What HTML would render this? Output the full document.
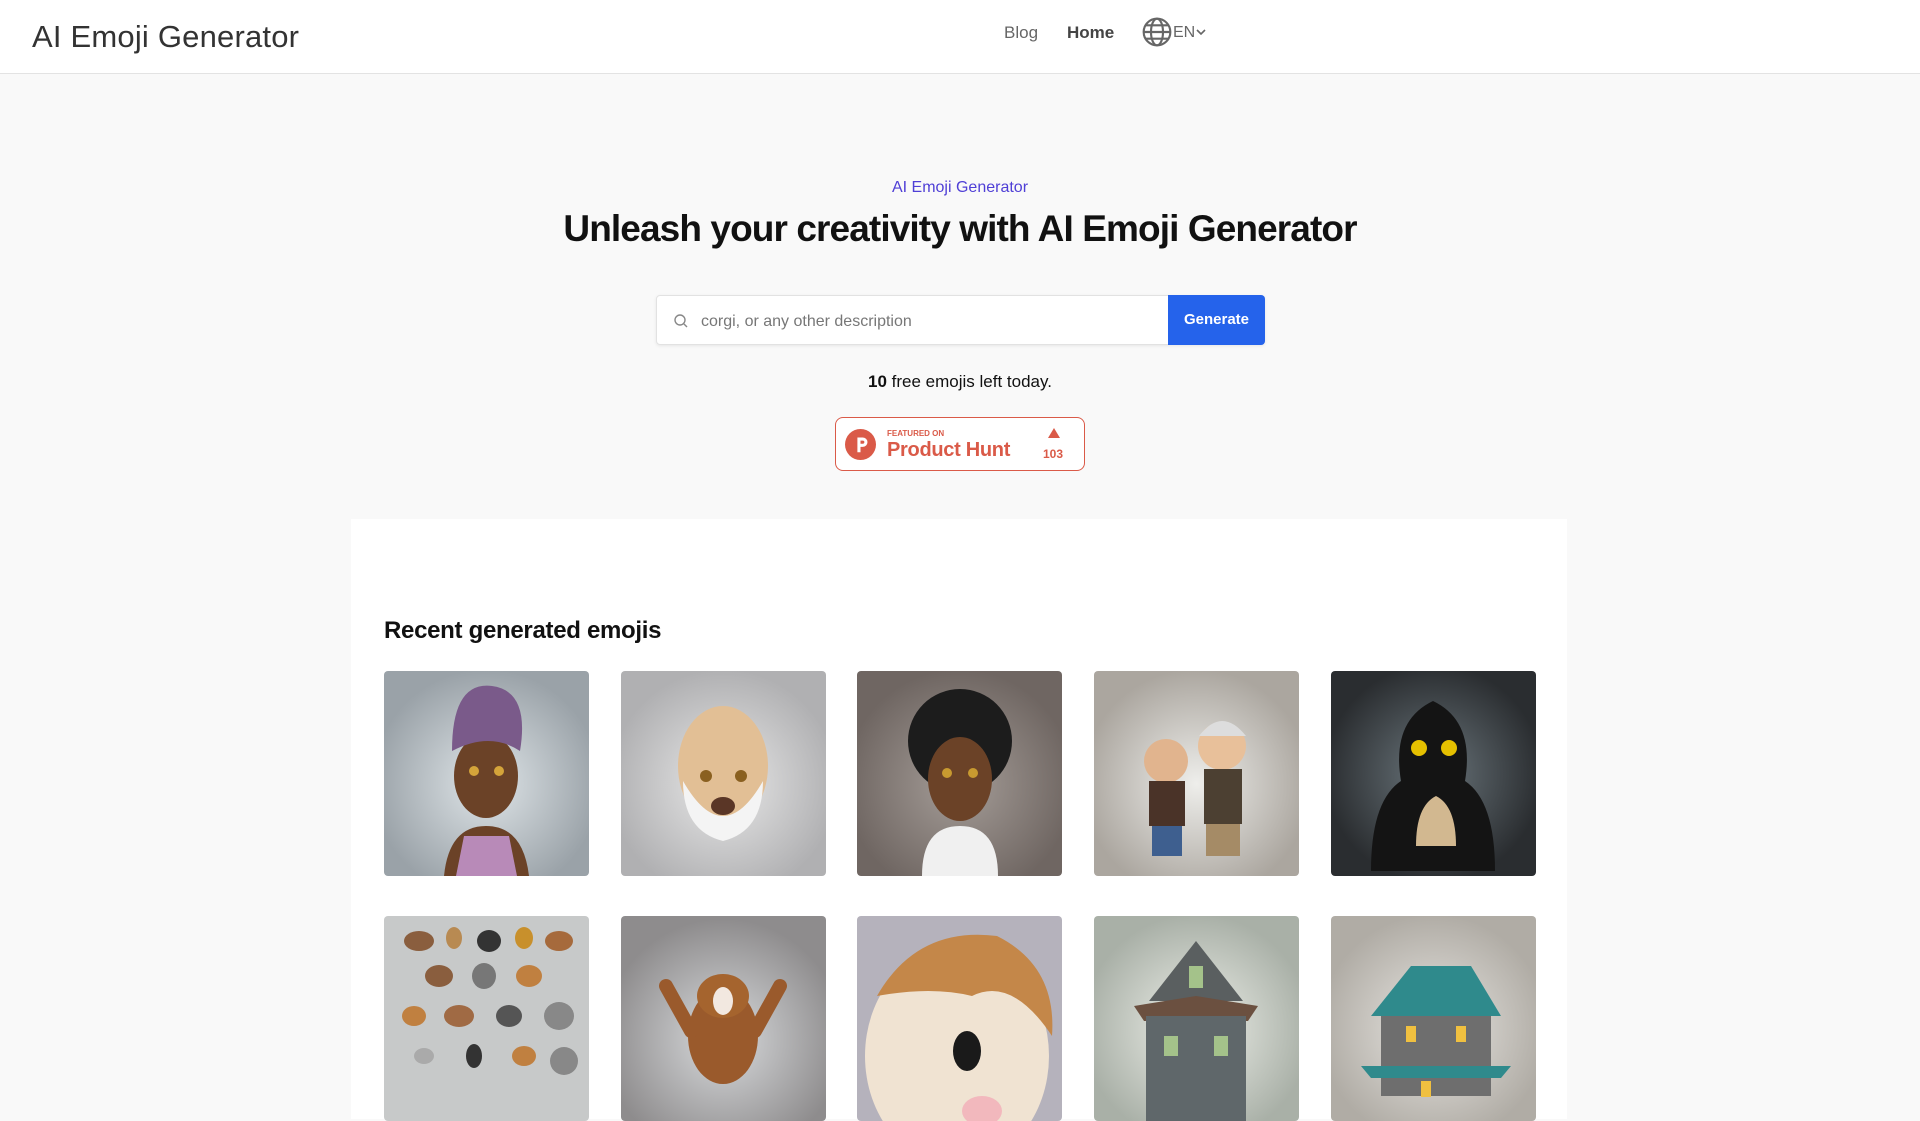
<!DOCTYPE html>
<html><head><meta charset="utf-8"><style>
*{box-sizing:border-box;margin:0;padding:0}
body{width:1920px;height:1080px;overflow:hidden;background:#f9f9f9;font-family:"Liberation Sans",sans-serif;color:#111}
header{height:74px;background:#fff;border-bottom:1px solid #e3e3e3;position:relative}
.logo{position:absolute;left:32px;top:19px;font-size:31px;color:#333;letter-spacing:0.2px}
.nav{position:absolute;top:23px;font-size:17px;color:#666}
.sub{position:absolute;top:179px;width:100%;text-align:center;color:#4f3fd6;font-size:16px}
h1{position:absolute;top:208px;width:100%;text-align:center;font-size:37px;font-weight:bold;color:#111;letter-spacing:-0.9px}
.search{position:absolute;left:656px;top:295px;width:609px;height:50px;background:#fff;border:1px solid #e2e2e2;border-radius:4px;box-shadow:0 1px 3px rgba(0,0,0,.08)}
.search .ph{position:absolute;left:44px;top:17px;font-size:16px;color:#777}
.btn{position:absolute;right:-1px;top:-1px;width:97px;height:50px;background:#2563eb;color:#fff;border-radius:0 4px 4px 0;font-size:15px;font-weight:bold;text-align:center;line-height:50px}
.left{position:absolute;top:372px;width:100%;text-align:center;font-size:17px;color:#111}
.ph-badge{position:absolute;left:835px;top:417px;width:250px;height:54px;background:#fff;border:1px solid #da5a48;border-radius:8px}
.panel{position:absolute;left:351px;top:519px;width:1216px;height:600px;background:#fff}
.rt{position:absolute;left:384px;top:617px;font-size:24px;font-weight:bold;color:#111;letter-spacing:-0.3px}
.card{position:absolute;width:205px;height:205px;border-radius:4px;overflow:hidden}
</style></head><body>
<header>
<div class="logo">AI Emoji Generator</div>
<div class="nav" style="left:1004px">Blog</div>
<div class="nav" style="left:1067px;color:#444;font-weight:bold">Home</div>
<svg style="position:absolute;left:1141px;top:16px" width="32" height="32" viewBox="0 0 24 24" fill="none" stroke="#666" stroke-width="1.6"><circle cx="12" cy="12" r="10"/><ellipse cx="12" cy="12" rx="4.5" ry="10"/><line x1="2" y1="12" x2="22" y2="12"/><line x1="3.5" y1="7" x2="20.5" y2="7"/><line x1="3.5" y1="17" x2="20.5" y2="17"/></svg>
<div class="nav" style="left:1173px;font-size:16px;top:24px">EN</div>
<svg style="position:absolute;left:1196px;top:28px" width="10" height="8" viewBox="0 0 10 8"><path d="M1 2l4 4 4-4" stroke="#666" stroke-width="1.6" fill="none"/></svg>
</header>
<div class="sub">AI Emoji Generator</div>
<h1>Unleash your creativity with AI Emoji Generator</h1>
<div class="search">
<svg style="position:absolute;left:16px;top:17px" width="16" height="16" viewBox="0 0 16 16" fill="none" stroke="#888" stroke-width="1.4"><circle cx="7" cy="7" r="5"/><path d="M11 11l3 3"/></svg>
<div class="ph">corgi, or any other description</div>
<div class="btn">Generate</div>
</div>
<div class="left"><b>10</b> free emojis left today.</div>
<div class="ph-badge">
<svg style="position:absolute;left:9px;top:11px" width="31" height="31" viewBox="0 0 40 40"><circle cx="20" cy="20" r="20" fill="#da5a48"/><path d="M16 11h7a6 6 0 010 12h-3v7h-4z M20 15v4h3a2 2 0 000-4z" fill="#fff" fill-rule="evenodd"/></svg>
<div style="position:absolute;left:51px;top:11px;font-size:8px;font-weight:bold;color:#da5a48">FEATURED ON</div>
<div style="position:absolute;left:51px;top:21px;font-size:20px;font-weight:bold;color:#da5a48;letter-spacing:-0.3px">Product Hunt</div>
<div style="position:absolute;left:212px;top:10px;width:0;height:0;border-left:6px solid transparent;border-right:6px solid transparent;border-bottom:10px solid #da5a48"></div>
<div style="position:absolute;left:207px;top:29px;font-size:12px;font-weight:bold;color:#da5a48">103</div>
</div>
<div class="panel"></div>
<div class="rt">Recent generated emojis</div>

<div class="card" style="left:384px;top:671px;background:radial-gradient(circle at 50% 55%,#dfe5e8,#9aa2a8 75%)"><svg width="205" height="205"><path d="M60 205q5-50 42-50t43 50z" fill="#6b4227"/><path d="M72 205l8-40h45l8 40z" fill="#b88ab8"/><ellipse cx="102" cy="105" rx="32" ry="42" fill="#6b4227"/><path d="M68 80q0-70 40-65 38 5 28 65q-30-20-68 0z" fill="#7a5a8a"/><circle cx="90" cy="100" r="5" fill="#d4a43a"/><circle cx="115" cy="100" r="5" fill="#d4a43a"/></svg></div>
<div class="card" style="left:621px;top:671px;background:radial-gradient(circle at 50% 55%,#e8e8e8,#b0b0b2 75%)"><svg width="205" height="205"><ellipse cx="102" cy="95" rx="45" ry="60" fill="#e2bf95"/><path d="M62 110q40 70 80 0q0 50-40 60q-40-10-40-60z" fill="#f4f4f4"/><ellipse cx="102" cy="135" rx="12" ry="9" fill="#5a3626"/><circle cx="85" cy="105" r="6" fill="#8a6020"/><circle cx="120" cy="105" r="6" fill="#8a6020"/></svg></div>
<div class="card" style="left:857px;top:671px;background:radial-gradient(circle at 50% 55%,#a59d98,#6f6662 75%)"><svg width="205" height="205"><path d="M65 205q0-50 38-50t38 50z" fill="#f0f0f0"/><ellipse cx="103" cy="70" rx="52" ry="52" fill="#1c1c1c"/><ellipse cx="103" cy="108" rx="32" ry="42" fill="#6b4227"/><circle cx="90" cy="102" r="5" fill="#c89a30"/><circle cx="116" cy="102" r="5" fill="#c89a30"/></svg></div>
<div class="card" style="left:1094px;top:671px;background:radial-gradient(circle at 50% 55%,#eeeeeb,#aba69f 75%)"><svg width="205" height="205"><circle cx="72" cy="90" r="22" fill="#e1b48e"/><rect x="55" y="110" width="36" height="45" fill="#4a3328"/><rect x="58" y="155" width="30" height="30" fill="#3e5f8f"/><circle cx="128" cy="75" r="24" fill="#e8c09a"/><path d="M105 65q23-30 47 0" fill="#ddd"/><rect x="110" y="98" width="38" height="55" fill="#4c4032"/><rect x="112" y="153" width="34" height="32" fill="#a58b66"/></svg></div>
<div class="card" style="left:1331px;top:671px;background:radial-gradient(circle at 50% 50%,#6a757b,#2a2d30 75%)"><svg width="205" height="205"><path d="M40 200q0-70 30-90q-10-60 32-80 42 20 32 80 30 20 30 90z" fill="#141414"/><circle cx="88" cy="77" r="8" fill="#e5c000"/><circle cx="118" cy="77" r="8" fill="#e5c000"/><path d="M85 175q0-40 20-50 20 10 20 50z" fill="#d2b890"/></svg></div>

<div class="card" style="left:384px;top:916px;background:#c7c9c9"><svg width="205" height="205" fill="#8a5e3e"><ellipse cx="35" cy="25" rx="15" ry="10"/><ellipse cx="70" cy="22" rx="8" ry="11" fill="#b88a52"/><ellipse cx="105" cy="25" rx="12" ry="11" fill="#333"/><ellipse cx="140" cy="22" rx="9" ry="11" fill="#c8902c"/><ellipse cx="175" cy="25" rx="14" ry="10" fill="#a66a3c"/><ellipse cx="55" cy="60" rx="14" ry="11"/><ellipse cx="100" cy="60" rx="12" ry="13" fill="#777"/><ellipse cx="145" cy="60" rx="13" ry="11" fill="#c08040"/><ellipse cx="30" cy="100" rx="12" ry="10" fill="#c08040"/><ellipse cx="75" cy="100" rx="15" ry="11" fill="#a06a44"/><ellipse cx="125" cy="100" rx="13" ry="11" fill="#555"/><ellipse cx="175" cy="100" rx="15" ry="14" fill="#888"/><ellipse cx="40" cy="140" rx="10" ry="8" fill="#aaa"/><ellipse cx="90" cy="140" rx="8" ry="12" fill="#333"/><ellipse cx="140" cy="140" rx="12" ry="10" fill="#c08040"/><ellipse cx="180" cy="145" rx="14" ry="14" fill="#888"/></svg></div>
<div class="card" style="left:621px;top:916px;background:radial-gradient(circle at 50% 60%,#d8dadc,#8e8c8d 75%)"><svg width="205" height="205"><ellipse cx="102" cy="120" rx="35" ry="48" fill="#9a5a2c"/><ellipse cx="102" cy="80" rx="26" ry="22" fill="#a5642e"/><ellipse cx="102" cy="85" rx="10" ry="14" fill="#f2e8e0"/><path d="M70 115l-25-45M134 115l25-45" stroke="#9a5a2c" stroke-width="14" stroke-linecap="round"/></svg></div>
<div class="card" style="left:857px;top:916px;background:#b5b2bc"><svg width="205" height="205"><ellipse cx="100" cy="140" rx="92" ry="110" fill="#f0e3d2"/><path d="M20 80q40-70 120-60q60 30 55 100q-40-60-80-40q-40-10-95 0z" fill="#c48749"/><ellipse cx="110" cy="135" rx="14" ry="20" fill="#1a1a1a"/><ellipse cx="125" cy="195" rx="20" ry="15" fill="#f2b8bd"/></svg></div>
<div class="card" style="left:1094px;top:916px;background:radial-gradient(circle at 50% 55%,#eef0ea,#a9b0a7 75%)"><svg width="205" height="205"><path d="M55 85l47-60 47 60z" fill="#5a5f60"/><path d="M40 90l62-10 62 10-10 15h-104z" fill="#6b5040"/><rect x="52" y="100" width="100" height="110" fill="#5f676a"/><rect x="70" y="120" width="14" height="20" fill="#a4c28a"/><rect x="120" y="120" width="14" height="20" fill="#a4c28a"/><rect x="95" y="50" width="14" height="22" fill="#a4c28a"/></svg></div>
<div class="card" style="left:1331px;top:916px;background:radial-gradient(circle at 50% 55%,#e8e6e2,#b0aca5 75%)"><svg width="205" height="205"><path d="M40 100l40-50h60l30 50z" fill="#2f8a8c"/><rect x="50" y="100" width="110" height="80" fill="#6e6e6e"/><path d="M30 150h150l-10 12h-130z" fill="#2f8a8c"/><rect x="75" y="110" width="10" height="16" fill="#f0c040"/><rect x="125" y="110" width="10" height="16" fill="#f0c040"/><rect x="90" y="165" width="10" height="16" fill="#f0c040"/></svg></div>
</body></html>
